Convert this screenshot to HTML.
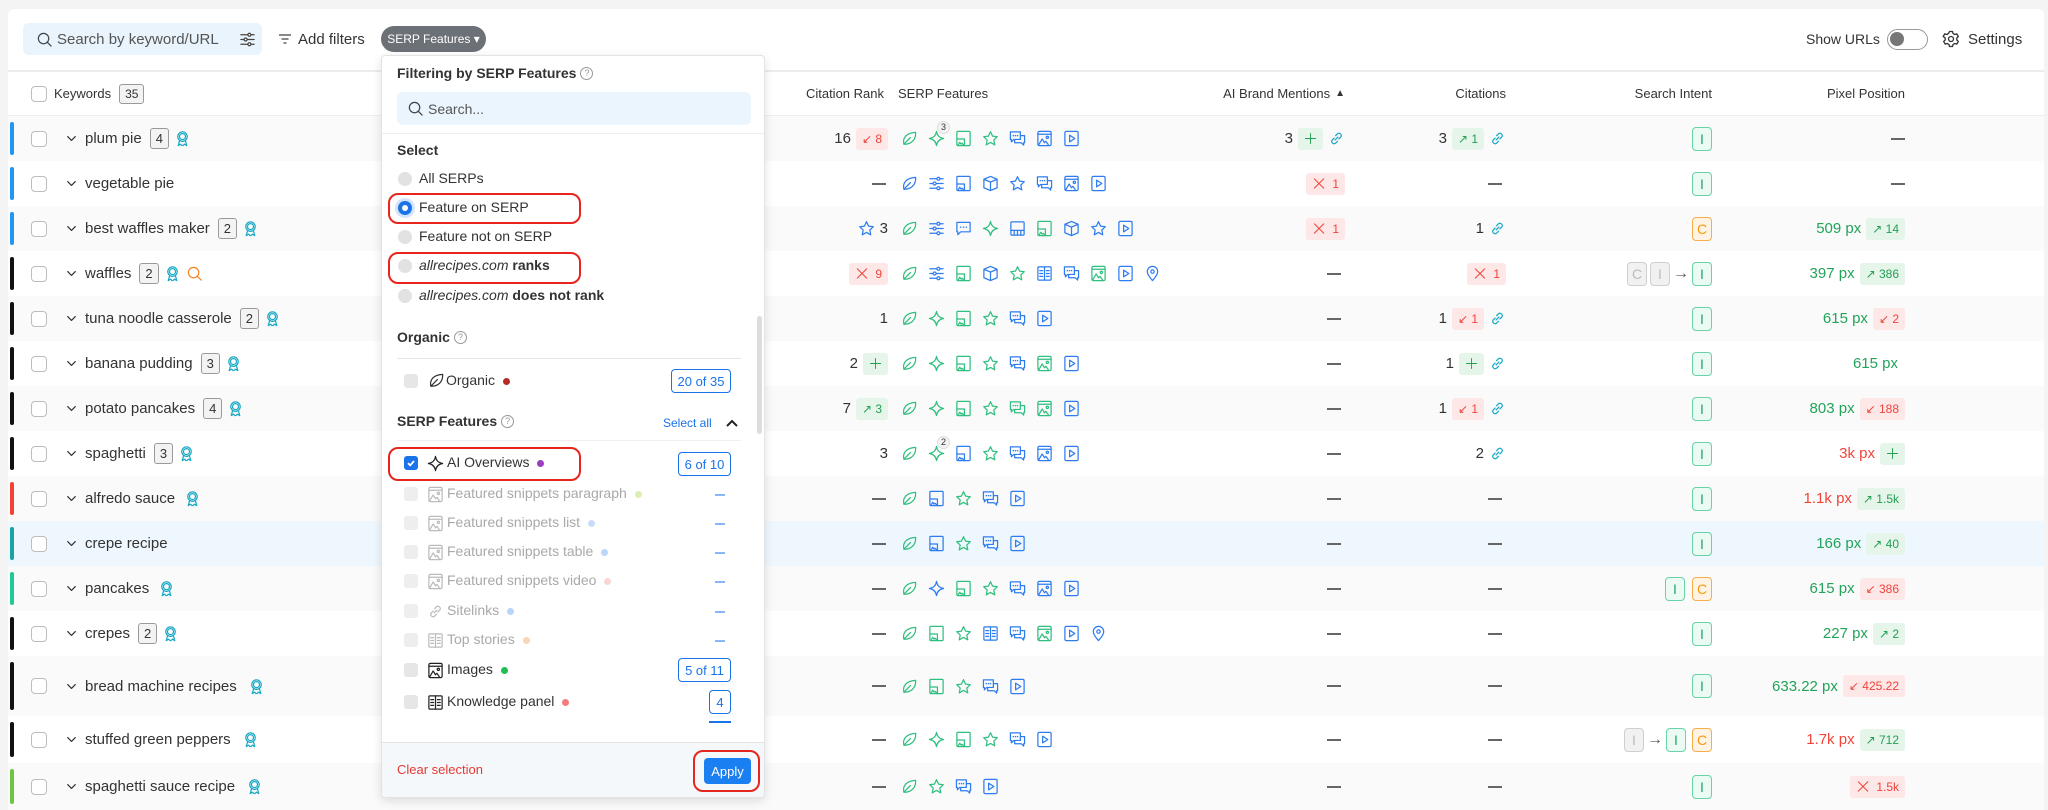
<!DOCTYPE html>
<html><head><meta charset="utf-8">
<style>
*{box-sizing:border-box;margin:0;padding:0}
body{width:2048px;height:810px;overflow:hidden;background:#f4f4f4;font-family:"Liberation Sans",Arial,sans-serif;color:#333;position:relative}
.card{position:absolute;left:8px;top:9px;right:4px;bottom:0;background:#fff;border-radius:6px 6px 0 0}
.abs{position:absolute}
.fx{display:flex;align-items:center}
svg.i{width:17px;height:17px;fill:none;stroke:currentColor;stroke-width:1.3;stroke-linecap:round;stroke-linejoin:round;flex:none}
.gr{color:#2fbf7e}.bl{color:#2d7cf0}.tl{color:#19a8c4}
.row{position:absolute;left:8px;right:4px}
.row>.c{position:absolute;top:0;height:100%;display:flex;align-items:center;gap:5px}
.sh{background:#fafafa}
.bar{position:absolute;left:2px;width:4px;top:6px;bottom:6px;border-radius:2px}
.cb{width:16px;height:16px;border:1px solid #bdbdbd;border-radius:4px;background:#fff}
.kw{font-size:15px;color:#333}
.cnt{font-size:13px;border:1px solid #9a9a9a;border-radius:3px;background:#f3f3f3;height:21px;min-width:19px;padding:0 5px;display:flex;align-items:center;justify-content:center;margin-left:3px}
.num{font-size:15px;color:#333}
.b{height:22px;padding:0 6px;border-radius:3px;font-size:12px;display:flex;align-items:center;gap:6px}
.r{background:#fde7e7;color:#f0443a}.g{background:#e5f5ea;color:#22a055}
.dash{width:14px;height:2px;background:#666}
.in{width:20px;height:24px;border-radius:4px;font-size:14px;display:flex;align-items:center;justify-content:center}
.iI{border:1px solid #67d3a6;background:#ebfaf3;color:#2aa36d}
.iC{border:1px solid #f6ae4c;background:#fff4e4;color:#f39a13}
.iG{border:1px solid #cfcfcf;background:#f1f1f1;color:#bbb}
.pg{font-size:15px;color:#22a35a}.pr{font-size:15px;color:#f0443a}
.serp{gap:10px!important}
.hd{font-size:13px;color:#333}
.dd{position:absolute;left:381px;top:55px;width:384px;height:743px;background:#fff;border:1px solid #e3e3e3;border-radius:4px;box-shadow:0 3px 10px rgba(0,0,0,.12);z-index:5;overflow:hidden}
.dd .t{position:absolute;font-size:14px}
.rad{position:absolute;left:16px;width:14px;height:14px;border-radius:50%;background:#e2e2e2}
.rbox{position:absolute;border:2.5px solid #e8251d;border-radius:10px}
.ck{position:absolute;left:22px;width:14px;height:14px;border-radius:3px;background:#e6e6e6}
.cntb{position:absolute;border:1.5px solid #1a73e8;border-radius:4px;color:#1a73e8;font-size:13px;display:flex;align-items:center;justify-content:center;height:24px}
.dot{display:inline-block;width:7px;height:7px;border-radius:50%;margin-left:8px;vertical-align:middle}
.dis{color:#a9a9a9}
.q{display:inline-block;width:13px;height:13px;border:1px solid #999;border-radius:50%;font-size:9px;color:#999;text-align:center;line-height:11px;margin-left:4px;vertical-align:2px;font-weight:normal}
.ddash{position:absolute;left:333px;width:10px;height:2px;background:#8ab4f8}
</style></head><body>
<svg width="0" height="0" style="position:absolute">
<defs>
<symbol id="leaf" viewBox="0 0 18 18"><path d="M3 15C1.5 8 6 3 15.5 2.5C16 10 11 15.5 3 15ZM3 15L10 8"/></symbol>
<symbol id="dia" viewBox="0 0 18 18"><path d="M9 1.5Q10 8 16.5 9Q10 10 9 16.5Q8 10 1.5 9Q8 8 9 1.5Z"/></symbol>
<symbol id="fsi" viewBox="0 0 18 18"><rect x="2" y="1.5" width="14" height="15" rx="1"/><path d="M2 9.5H10V16.5M3.5 15.5L5 13L6.5 15L7.5 14L9 15.5"/></symbol>
<symbol id="star" viewBox="0 0 18 18"><path d="M9 1.8L11.2 6.5L16.2 7.1L12.5 10.6L13.5 15.7L9 13.2L4.5 15.7L5.5 10.6L1.8 7.1L6.8 6.5Z"/></symbol>
<symbol id="chat" viewBox="0 0 18 18"><path d="M1.5 2H12V10H5L2.5 12.5V10H1.5ZM12 6H16.5V13.5H15.5V16L13 13.5H6V10"/><path d="M4.5 6h.1M6.8 6h.1M9 6h.1" stroke-width="1.6"/></symbol>
<symbol id="photo" viewBox="0 0 18 18"><rect x="2" y="1.5" width="14" height="15" rx="1.5"/><path d="M2 4.5H16M3 15.5L6.5 9.5L9 13.5L10.5 12L13 15.5"/><circle cx="12" cy="7.8" r="1.2"/></symbol>
<symbol id="play" viewBox="0 0 18 18"><rect x="2" y="1.5" width="14" height="15" rx="1.5"/><path d="M7 5.5L12.5 9L7 12.5Z"/></symbol>
<symbol id="sld" viewBox="0 0 18 18"><path d="M2 4H16M2 9H16M2 14H16"/><circle cx="11" cy="4" r="1.6" fill="#fff"/><circle cx="7" cy="9" r="1.6" fill="#fff"/><circle cx="11" cy="14" r="1.6" fill="#fff"/></symbol>
<symbol id="cube" viewBox="0 0 18 18"><path d="M9 1.5L16 4.5V13.5L9 16.5L2 13.5V4.5ZM2 4.5L9 7.5L16 4.5M9 7.5V16.5"/></symbol>
<symbol id="book" viewBox="0 0 18 18"><rect x="2" y="2" width="14" height="14" rx="1"/><path d="M9 2V16M4 6H7M4 9H7M4 12H7M11 6H14M11 9H14M11 12H14"/></symbol>
<symbol id="pin" viewBox="0 0 18 18"><path d="M9 16.5C5 12 3.5 9.5 3.5 7A5.5 5.5 0 0 1 14.5 7C14.5 9.5 13 12 9 16.5Z"/><circle cx="9" cy="7" r="1.8"/></symbol>
<symbol id="tbl" viewBox="0 0 18 18"><rect x="2" y="2" width="14" height="14" rx="1"/><path d="M2 11H16M5.5 11V16M9 11V16M12.5 11V16"/></symbol>
<symbol id="bub" viewBox="0 0 18 18"><path d="M2 2.5H16V12.5H6L3 15.5V12.5H2Z"/><path d="M6 7.5h.1M9 7.5h.1M12 7.5h.1" stroke-width="1.6"/></symbol>
<symbol id="link" viewBox="0 0 18 18"><path d="M7.5 10.5L10.5 7.5M6.5 8.5L4.5 10.5A2.5 2.5 0 0 0 8 14L10 12M11.5 9.5L13.5 7.5A2.5 2.5 0 0 0 10 4L8 6"/></symbol>
<symbol id="award" viewBox="0 0 18 18"><circle cx="9" cy="7" r="5"/><circle cx="9" cy="7" r="3.2"/><path d="M6 11L4.5 16.5L7 15L8.5 16.5M12 11L13.5 16.5L11 15L9.5 16.5"/></symbol>
<symbol id="x" viewBox="0 0 18 18"><path d="M3 3L15 15M15 3L3 15"/></symbol>
<symbol id="plus" viewBox="0 0 18 18"><path d="M9 2V16M2 9H16"/></symbol>
<symbol id="chev" viewBox="0 0 18 18"><path d="M5 7L9 11L13 7"/></symbol>
<symbol id="srch" viewBox="0 0 18 18"><circle cx="8" cy="8" r="5.5"/><path d="M12 12L16 16"/></symbol>
</defs></svg>

<div class="card"></div>
<!-- toolbar -->
<div class="abs fx" style="left:23px;top:23px;width:239px;height:32px;background:#e9f4fd;border-radius:6px;padding-left:13px;font-size:15px;color:#555;gap:4px"><svg class="i" style="color:#444"><use href="#srch"/></svg>Search by keyword/URL<svg class="i" style="color:#444;margin-left:16px"><use href="#sld"/></svg></div>
<div class="abs fx" style="left:278px;top:23px;height:32px;font-size:15px;color:#333;gap:6px"><svg width="14" height="12" style="stroke:#444;stroke-width:1.3"><path d="M1 2H13M3.5 6H10.5M5.5 10H8.5"/></svg>Add filters</div>
<div class="abs fx" style="left:381px;top:26px;width:105px;height:26px;border-radius:13px;background:#6c7077;color:#fff;font-size:12px;justify-content:center">SERP Features ▾</div>
<div class="abs fx" style="left:1806px;top:27px;height:24px;font-size:14px;color:#333">Show URLs</div>
<div class="abs" style="left:1887px;top:29px;width:41px;height:21px;border:1.5px solid #999;border-radius:11px"><div class="abs" style="left:2px;top:2px;width:14px;height:14px;border-radius:50%;background:#777"></div></div>
<svg class="abs" style="left:1942px;top:30px;width:18px;height:18px;fill:none;stroke:#333;stroke-width:1.3" viewBox="0 0 18 18"><circle cx="9" cy="9" r="2.5"/><path d="M7.5 1.5h3l.5 2 1.8 1 2-.6 1.5 2.6-1.5 1.5v2l1.5 1.5-1.5 2.6-2-.6-1.8 1-.5 2h-3l-.5-2-1.8-1-2 .6-1.5-2.6 1.5-1.5v-2L1.2 6.5 2.7 3.9l2 .6 1.8-1z"/></svg>
<div class="abs fx" style="left:1968px;top:27px;height:24px;font-size:15px;color:#333">Settings</div>
<div class="abs" style="left:8px;right:4px;top:70px;height:2px;background:#ececec"></div>

<!-- header -->
<div class="row" style="top:72px;height:44px;border-bottom:1px solid #eee">
<div class="c" style="left:23px"><div class="cb"></div><span class="hd" style="margin-left:2px">Keywords</span><span class="cnt" style="font-size:12px;height:20px">35</span></div>
<div class="c hd" style="right:1160px">Citation Rank</div>
<div class="c hd" style="left:890px">SERP Features</div>
<div class="c hd" style="right:699px">AI Brand Mentions <span style="font-size:10px">▲</span></div>
<div class="c hd" style="right:538px">Citations</div>
<div class="c hd" style="right:332px">Search Intent</div>
<div class="c hd" style="right:139px">Pixel Position</div>
</div>

<!-- rows -->
<div class="row sh" style="top:116px;height:45px"><div class="bar" style="background:#2196f3"></div><div class="c" style="left:23px"><div class="cb"></div></div><div class="c" style="left:55px"><svg class="i" style="color:#333"><use href="#chev"/></svg><span class="kw">plum pie</span><span class="cnt">4</span><svg class="i tl"><use href="#award"/></svg></div>
<div class="c" style="right:1156px"><span class="num">16</span><span class="b r">↙ 8</span></div>
<div class="c serp" style="left:893px"><svg class="i gr"><use href="#leaf"/></svg><span style="position:relative;display:flex"><svg class="i gr"><use href="#dia"/></svg><span style="position:absolute;left:9px;top:-9px;width:13px;height:13px;border-radius:50%;background:#f3f3f3;border:1px solid #ddd;font-size:9px;text-align:center;line-height:11px">3</span></span><svg class="i gr"><use href="#fsi"/></svg><svg class="i gr"><use href="#star"/></svg><svg class="i bl"><use href="#chat"/></svg><svg class="i bl"><use href="#photo"/></svg><svg class="i bl"><use href="#play"/></svg></div>
<div class="c" style="right:699px"><span class="num">3</span><span class="b g"><svg class="i" style="width:13px"><use href="#plus"/></svg></span><svg class="i tl"><use href="#link"/></svg></div>
<div class="c" style="right:538px"><span class="num">3</span><span class="b g">↗ 1</span><svg class="i tl"><use href="#link"/></svg></div>
<div class="c" style="right:332px"><span class="in iI">I</span></div>
<div class="c" style="right:139px"><span class="dash"></span></div></div>

<div class="row" style="top:161px;height:45px"><div class="bar" style="background:#2196f3"></div><div class="c" style="left:23px"><div class="cb"></div></div><div class="c" style="left:55px"><svg class="i" style="color:#333"><use href="#chev"/></svg><span class="kw">vegetable pie</span></div>
<div class="c" style="right:1158px"><span class="dash"></span></div>
<div class="c serp" style="left:893px"><svg class="i bl"><use href="#leaf"/></svg><svg class="i bl"><use href="#sld"/></svg><svg class="i bl"><use href="#fsi"/></svg><svg class="i bl"><use href="#cube"/></svg><svg class="i bl"><use href="#star"/></svg><svg class="i bl"><use href="#chat"/></svg><svg class="i bl"><use href="#photo"/></svg><svg class="i bl"><use href="#play"/></svg></div>
<div class="c" style="right:699px"><span class="b r"><svg class="i" style="width:14px"><use href="#x"/></svg>1</span></div>
<div class="c" style="right:542px"><span class="dash"></span></div>
<div class="c" style="right:332px"><span class="in iI">I</span></div>
<div class="c" style="right:139px"><span class="dash"></span></div></div>

<div class="row sh" style="top:206px;height:45px"><div class="bar" style="background:#2196f3"></div><div class="c" style="left:23px"><div class="cb"></div></div><div class="c" style="left:55px"><svg class="i" style="color:#333"><use href="#chev"/></svg><span class="kw">best waffles maker</span><span class="cnt">2</span><svg class="i tl"><use href="#award"/></svg></div>
<div class="c" style="right:1156px"><svg class="i bl"><use href="#star"/></svg><span class="num">3</span></div>
<div class="c serp" style="left:893px"><svg class="i gr"><use href="#leaf"/></svg><svg class="i bl"><use href="#sld"/></svg><svg class="i bl"><use href="#bub"/></svg><svg class="i gr"><use href="#dia"/></svg><svg class="i bl"><use href="#tbl"/></svg><svg class="i gr"><use href="#fsi"/></svg><svg class="i bl"><use href="#cube"/></svg><svg class="i bl"><use href="#star"/></svg><svg class="i bl"><use href="#play"/></svg></div>
<div class="c" style="right:699px"><span class="b r"><svg class="i" style="width:14px"><use href="#x"/></svg>1</span></div>
<div class="c" style="right:538px"><span class="num">1</span><svg class="i tl"><use href="#link"/></svg></div>
<div class="c" style="right:332px"><span class="in iC">C</span></div>
<div class="c" style="right:139px"><span class="pg">509 px</span><span class="b g">↗ 14</span></div></div>

<div class="row" style="top:251px;height:45px"><div class="bar" style="background:#111"></div><div class="c" style="left:23px"><div class="cb"></div></div><div class="c" style="left:55px"><svg class="i" style="color:#333"><use href="#chev"/></svg><span class="kw">waffles</span><span class="cnt">2</span><svg class="i tl"><use href="#award"/></svg><svg class="i" style="color:#f5831f"><use href="#srch"/></svg></div>
<div class="c" style="right:1156px"><span class="b r"><svg class="i" style="width:14px"><use href="#x"/></svg>9</span></div>
<div class="c serp" style="left:893px"><svg class="i gr"><use href="#leaf"/></svg><svg class="i bl"><use href="#sld"/></svg><svg class="i gr"><use href="#fsi"/></svg><svg class="i bl"><use href="#cube"/></svg><svg class="i gr"><use href="#star"/></svg><svg class="i bl"><use href="#book"/></svg><svg class="i bl"><use href="#chat"/></svg><svg class="i gr"><use href="#photo"/></svg><svg class="i bl"><use href="#play"/></svg><svg class="i bl"><use href="#pin"/></svg></div>
<div class="c" style="right:703px"><span class="dash"></span></div>
<div class="c" style="right:538px"><span class="b r"><svg class="i" style="width:14px"><use href="#x"/></svg>1</span></div>
<div class="c" style="right:332px;gap:3px"><span class="in iG">C</span><span class="in iG">I</span><span style="color:#555">→</span><span class="in iI">I</span></div>
<div class="c" style="right:139px"><span class="pg">397 px</span><span class="b g">↗ 386</span></div></div>

<div class="row sh" style="top:296px;height:45px"><div class="bar" style="background:#111"></div><div class="c" style="left:23px"><div class="cb"></div></div><div class="c" style="left:55px"><svg class="i" style="color:#333"><use href="#chev"/></svg><span class="kw">tuna noodle casserole</span><span class="cnt">2</span><svg class="i tl"><use href="#award"/></svg></div>
<div class="c" style="right:1156px"><span class="num">1</span></div>
<div class="c serp" style="left:893px"><svg class="i gr"><use href="#leaf"/></svg><svg class="i gr"><use href="#dia"/></svg><svg class="i gr"><use href="#fsi"/></svg><svg class="i gr"><use href="#star"/></svg><svg class="i bl"><use href="#chat"/></svg><svg class="i bl"><use href="#play"/></svg></div>
<div class="c" style="right:703px"><span class="dash"></span></div>
<div class="c" style="right:538px"><span class="num">1</span><span class="b r">↙ 1</span><svg class="i tl"><use href="#link"/></svg></div>
<div class="c" style="right:332px"><span class="in iI">I</span></div>
<div class="c" style="right:139px"><span class="pg">615 px</span><span class="b r">↙ 2</span></div></div>

<div class="row" style="top:341px;height:45px"><div class="bar" style="background:#111"></div><div class="c" style="left:23px"><div class="cb"></div></div><div class="c" style="left:55px"><svg class="i" style="color:#333"><use href="#chev"/></svg><span class="kw">banana pudding</span><span class="cnt">3</span><svg class="i tl"><use href="#award"/></svg></div>
<div class="c" style="right:1156px"><span class="num">2</span><span class="b g"><svg class="i" style="width:13px"><use href="#plus"/></svg></span></div>
<div class="c serp" style="left:893px"><svg class="i gr"><use href="#leaf"/></svg><svg class="i gr"><use href="#dia"/></svg><svg class="i gr"><use href="#fsi"/></svg><svg class="i gr"><use href="#star"/></svg><svg class="i bl"><use href="#chat"/></svg><svg class="i gr"><use href="#photo"/></svg><svg class="i bl"><use href="#play"/></svg></div>
<div class="c" style="right:703px"><span class="dash"></span></div>
<div class="c" style="right:538px"><span class="num">1</span><span class="b g"><svg class="i" style="width:13px"><use href="#plus"/></svg></span><svg class="i tl"><use href="#link"/></svg></div>
<div class="c" style="right:332px"><span class="in iI">I</span></div>
<div class="c" style="right:146px"><span class="pg">615 px</span></div></div>

<div class="row sh" style="top:386px;height:45px"><div class="bar" style="background:#111"></div><div class="c" style="left:23px"><div class="cb"></div></div><div class="c" style="left:55px"><svg class="i" style="color:#333"><use href="#chev"/></svg><span class="kw">potato pancakes</span><span class="cnt">4</span><svg class="i tl"><use href="#award"/></svg></div>
<div class="c" style="right:1156px"><span class="num">7</span><span class="b g">↗ 3</span></div>
<div class="c serp" style="left:893px"><svg class="i gr"><use href="#leaf"/></svg><svg class="i gr"><use href="#dia"/></svg><svg class="i gr"><use href="#fsi"/></svg><svg class="i gr"><use href="#star"/></svg><svg class="i gr"><use href="#chat"/></svg><svg class="i gr"><use href="#photo"/></svg><svg class="i bl"><use href="#play"/></svg></div>
<div class="c" style="right:703px"><span class="dash"></span></div>
<div class="c" style="right:538px"><span class="num">1</span><span class="b r">↙ 1</span><svg class="i tl"><use href="#link"/></svg></div>
<div class="c" style="right:332px"><span class="in iI">I</span></div>
<div class="c" style="right:139px"><span class="pg">803 px</span><span class="b r">↙ 188</span></div></div>

<div class="row" style="top:431px;height:45px"><div class="bar" style="background:#111"></div><div class="c" style="left:23px"><div class="cb"></div></div><div class="c" style="left:55px"><svg class="i" style="color:#333"><use href="#chev"/></svg><span class="kw">spaghetti</span><span class="cnt">3</span><svg class="i tl"><use href="#award"/></svg></div>
<div class="c" style="right:1156px"><span class="num">3</span></div>
<div class="c serp" style="left:893px"><svg class="i gr"><use href="#leaf"/></svg><span style="position:relative;display:flex"><svg class="i gr"><use href="#dia"/></svg><span style="position:absolute;left:9px;top:-9px;width:13px;height:13px;border-radius:50%;background:#f3f3f3;border:1px solid #ddd;font-size:9px;text-align:center;line-height:11px">2</span></span><svg class="i bl"><use href="#fsi"/></svg><svg class="i gr"><use href="#star"/></svg><svg class="i bl"><use href="#chat"/></svg><svg class="i bl"><use href="#photo"/></svg><svg class="i bl"><use href="#play"/></svg></div>
<div class="c" style="right:703px"><span class="dash"></span></div>
<div class="c" style="right:538px"><span class="num">2</span><svg class="i tl"><use href="#link"/></svg></div>
<div class="c" style="right:332px"><span class="in iI">I</span></div>
<div class="c" style="right:139px"><span class="pr">3k px</span><span class="b g"><svg class="i" style="width:13px"><use href="#plus"/></svg></span></div></div>

<div class="row sh" style="top:476px;height:45px"><div class="bar" style="background:#f44336"></div><div class="c" style="left:23px"><div class="cb"></div></div><div class="c" style="left:55px"><svg class="i" style="color:#333"><use href="#chev"/></svg><span class="kw">alfredo sauce</span><svg class="i tl" style="margin-left:4px"><use href="#award"/></svg></div>
<div class="c" style="right:1158px"><span class="dash"></span></div>
<div class="c serp" style="left:893px"><svg class="i gr"><use href="#leaf"/></svg><svg class="i bl"><use href="#fsi"/></svg><svg class="i gr"><use href="#star"/></svg><svg class="i bl"><use href="#chat"/></svg><svg class="i bl"><use href="#play"/></svg></div>
<div class="c" style="right:703px"><span class="dash"></span></div>
<div class="c" style="right:542px"><span class="dash"></span></div>
<div class="c" style="right:332px"><span class="in iI">I</span></div>
<div class="c" style="right:139px"><span class="pr">1.1k px</span><span class="b g">↗ 1.5k</span></div></div>

<div class="row" style="top:521px;height:45px;background:#eef7fe"><div class="bar" style="background:#1aa3a3"></div><div class="c" style="left:23px"><div class="cb"></div></div><div class="c" style="left:55px"><svg class="i" style="color:#333"><use href="#chev"/></svg><span class="kw">crepe recipe</span></div>
<div class="c" style="right:1158px"><span class="dash"></span></div>
<div class="c serp" style="left:893px"><svg class="i gr"><use href="#leaf"/></svg><svg class="i bl"><use href="#fsi"/></svg><svg class="i gr"><use href="#star"/></svg><svg class="i bl"><use href="#chat"/></svg><svg class="i bl"><use href="#play"/></svg></div>
<div class="c" style="right:703px"><span class="dash"></span></div>
<div class="c" style="right:542px"><span class="dash"></span></div>
<div class="c" style="right:332px"><span class="in iI">I</span></div>
<div class="c" style="right:139px"><span class="pg">166 px</span><span class="b g">↗ 40</span></div></div>

<div class="row sh" style="top:566px;height:45px"><div class="bar" style="background:#20c997"></div><div class="c" style="left:23px"><div class="cb"></div></div><div class="c" style="left:55px"><svg class="i" style="color:#333"><use href="#chev"/></svg><span class="kw">pancakes</span><svg class="i tl" style="margin-left:4px"><use href="#award"/></svg></div>
<div class="c" style="right:1158px"><span class="dash"></span></div>
<div class="c serp" style="left:893px"><svg class="i gr"><use href="#leaf"/></svg><svg class="i bl"><use href="#dia"/></svg><svg class="i gr"><use href="#fsi"/></svg><svg class="i gr"><use href="#star"/></svg><svg class="i bl"><use href="#chat"/></svg><svg class="i bl"><use href="#photo"/></svg><svg class="i bl"><use href="#play"/></svg></div>
<div class="c" style="right:703px"><span class="dash"></span></div>
<div class="c" style="right:542px"><span class="dash"></span></div>
<div class="c" style="right:332px;gap:7px"><span class="in iI">I</span><span class="in iC">C</span></div>
<div class="c" style="right:139px"><span class="pg">615 px</span><span class="b r">↙ 386</span></div></div>

<div class="row" style="top:611px;height:45px"><div class="bar" style="background:#111"></div><div class="c" style="left:23px"><div class="cb"></div></div><div class="c" style="left:55px"><svg class="i" style="color:#333"><use href="#chev"/></svg><span class="kw">crepes</span><span class="cnt">2</span><svg class="i tl"><use href="#award"/></svg></div>
<div class="c" style="right:1158px"><span class="dash"></span></div>
<div class="c serp" style="left:893px"><svg class="i gr"><use href="#leaf"/></svg><svg class="i gr"><use href="#fsi"/></svg><svg class="i gr"><use href="#star"/></svg><svg class="i bl"><use href="#book"/></svg><svg class="i bl"><use href="#chat"/></svg><svg class="i gr"><use href="#photo"/></svg><svg class="i bl"><use href="#play"/></svg><svg class="i bl"><use href="#pin"/></svg></div>
<div class="c" style="right:703px"><span class="dash"></span></div>
<div class="c" style="right:542px"><span class="dash"></span></div>
<div class="c" style="right:332px"><span class="in iI">I</span></div>
<div class="c" style="right:139px"><span class="pg">227 px</span><span class="b g">↗ 2</span></div></div>

<div class="row sh" style="top:656px;height:60px"><div class="bar" style="background:#111"></div><div class="c" style="left:23px"><div class="cb"></div></div><div class="c" style="left:55px"><svg class="i" style="color:#333"><use href="#chev"/></svg><span class="kw">bread machine recipes</span><svg class="i tl" style="margin-left:6px"><use href="#award"/></svg></div>
<div class="c" style="right:1158px"><span class="dash"></span></div>
<div class="c serp" style="left:893px"><svg class="i gr"><use href="#leaf"/></svg><svg class="i gr"><use href="#fsi"/></svg><svg class="i gr"><use href="#star"/></svg><svg class="i bl"><use href="#chat"/></svg><svg class="i bl"><use href="#play"/></svg></div>
<div class="c" style="right:703px"><span class="dash"></span></div>
<div class="c" style="right:542px"><span class="dash"></span></div>
<div class="c" style="right:332px"><span class="in iI">I</span></div>
<div class="c" style="right:139px"><span class="pg">633.22 px</span><span class="b r">↙ 425.22</span></div></div>

<div class="row" style="top:716px;height:47px"><div class="bar" style="background:#111"></div><div class="c" style="left:23px"><div class="cb"></div></div><div class="c" style="left:55px"><svg class="i" style="color:#333"><use href="#chev"/></svg><span class="kw">stuffed green peppers</span><svg class="i tl" style="margin-left:6px"><use href="#award"/></svg></div>
<div class="c" style="right:1158px"><span class="dash"></span></div>
<div class="c serp" style="left:893px"><svg class="i gr"><use href="#leaf"/></svg><svg class="i gr"><use href="#dia"/></svg><svg class="i gr"><use href="#fsi"/></svg><svg class="i gr"><use href="#star"/></svg><svg class="i bl"><use href="#chat"/></svg><svg class="i bl"><use href="#play"/></svg></div>
<div class="c" style="right:703px"><span class="dash"></span></div>
<div class="c" style="right:542px"><span class="dash"></span></div>
<div class="c" style="right:332px;gap:3px"><span class="in iG">I</span><span style="color:#555">→</span><span class="in iI">I</span><span class="in iC" style="margin-left:3px">C</span></div>
<div class="c" style="right:139px"><span class="pr">1.7k px</span><span class="b g">↗ 712</span></div></div>

<div class="row sh" style="top:763px;height:47px"><div class="bar" style="background:#6cc644"></div><div class="c" style="left:23px"><div class="cb"></div></div><div class="c" style="left:55px"><svg class="i" style="color:#333"><use href="#chev"/></svg><span class="kw">spaghetti sauce recipe</span><svg class="i tl" style="margin-left:6px"><use href="#award"/></svg></div>
<div class="c" style="right:1158px"><span class="dash"></span></div>
<div class="c serp" style="left:893px"><svg class="i gr"><use href="#leaf"/></svg><svg class="i gr"><use href="#star"/></svg><svg class="i bl"><use href="#chat"/></svg><svg class="i bl"><use href="#play"/></svg></div>
<div class="c" style="right:703px"><span class="dash"></span></div>
<div class="c" style="right:542px"><span class="dash"></span></div>
<div class="c" style="right:332px"><span class="in iI">I</span></div>
<div class="c" style="right:139px"><span class="b r"><svg class="i" style="width:14px"><use href="#x"/></svg>1.5k</span></div></div>

<!-- dropdown -->
<div class="dd">
<div class="t" style="left:15px;top:9px;font-weight:bold">Filtering by SERP Features<span class="q">?</span></div>
<div class="abs fx" style="left:15px;top:36px;width:354px;height:33px;background:#ebf5fd;border-radius:6px;padding-left:10px;gap:4px;font-size:14px;color:#555"><svg class="i" style="color:#444"><use href="#srch"/></svg>Search...</div>
<div class="abs" style="left:0;right:0;top:77px;height:1px;background:#eee"></div>
<div class="t" style="left:15px;top:86px;font-weight:bold">Select</div>
<div class="rad" style="top:116px"></div><div class="t" style="left:37px;top:114px">All SERPs</div>
<div class="rad" style="top:145px;background:#1a73e8;box-shadow:0 0 0 3px #d4e5fb"><div style="position:absolute;left:4px;top:4px;width:6px;height:6px;border-radius:50%;background:#fff"></div></div><div class="t" style="left:37px;top:143px">Feature on SERP</div>
<div class="rad" style="top:174px"></div><div class="t" style="left:37px;top:172px">Feature not on SERP</div>
<div class="rad" style="top:203px"></div><div class="t" style="left:37px;top:201px"><i>allrecipes.com</i> <b>ranks</b></div>
<div class="rad" style="top:233px"></div><div class="t" style="left:37px;top:231px"><i>allrecipes.com</i> <b>does not rank</b></div>
<div class="rbox" style="left:6px;top:137px;width:193px;height:31px"></div>
<div class="rbox" style="left:6px;top:196px;width:193px;height:32px"></div>
<div class="abs" style="left:375px;top:260px;width:5px;height:118px;background:#ddd;border-radius:3px"></div>
<div class="t" style="left:15px;top:273px;font-weight:bold">Organic<span class="q">?</span></div>
<div class="abs" style="left:15px;top:302px;width:344px;height:1px;background:#e6e6e6"></div>
<div class="ck" style="top:318px"></div><svg class="i abs" style="left:46px;top:316px;color:#333"><use href="#leaf"/></svg><div class="t" style="left:64px;top:316px">Organic<span class="dot" style="background:#b72b2b"></span></div>
<div class="cntb" style="left:289px;top:313px;width:60px">20 of 35</div>
<div class="t" style="left:15px;top:357px;font-weight:bold">SERP Features<span class="q">?</span></div>
<div class="t" style="left:281px;top:360px;font-size:12px;color:#1a73e8">Select all</div>
<svg class="abs" style="left:343px;top:361px;width:14px;height:12px;fill:none;stroke:#222;stroke-width:2"><path d="M2 9L7 4L12 9"/></svg>
<div class="abs" style="left:15px;top:384px;width:344px;height:1px;background:#f0f0f0"></div>
<div class="ck" style="top:400px;background:#1a73e8"><svg width="14" height="14" style="fill:none;stroke:#fff;stroke-width:1.8"><path d="M4 7.2L6.2 9.3L10 5"/></svg></div>
<svg class="i abs" style="left:45px;top:399px;color:#222"><use href="#dia"/></svg><div class="t" style="left:65px;top:398px">AI Overviews<span class="dot" style="background:#9b3fc2"></span></div>
<div class="cntb" style="left:296px;top:396px;width:53px">6 of 10</div>
<div class="rbox" style="left:6px;top:391px;width:193px;height:34px"></div>
<div class="ck" style="top:431px;background:#eee"></div><svg class="i abs" style="left:45px;top:430px;color:#bbb"><use href="#photo"/></svg><div class="t dis" style="left:65px;top:429px">Featured snippets paragraph<span class="dot" style="background:#dcefb3"></span></div><div class="ddash" style="top:438px"></div>
<div class="ck" style="top:460px;background:#eee"></div><svg class="i abs" style="left:45px;top:459px;color:#bbb"><use href="#photo"/></svg><div class="t dis" style="left:65px;top:458px">Featured snippets list<span class="dot" style="background:#c8dcfa"></span></div><div class="ddash" style="top:467px"></div>
<div class="ck" style="top:489px;background:#eee"></div><svg class="i abs" style="left:45px;top:488px;color:#bbb"><use href="#photo"/></svg><div class="t dis" style="left:65px;top:487px">Featured snippets table<span class="dot" style="background:#bcd6fb"></span></div><div class="ddash" style="top:496px"></div>
<div class="ck" style="top:518px;background:#eee"></div><svg class="i abs" style="left:45px;top:517px;color:#bbb"><use href="#photo"/></svg><div class="t dis" style="left:65px;top:516px">Featured snippets video<span class="dot" style="background:#fbd3d3"></span></div><div class="ddash" style="top:525px"></div>
<div class="ck" style="top:548px;background:#eee"></div><svg class="i abs" style="left:45px;top:547px;color:#bbb"><use href="#link"/></svg><div class="t dis" style="left:65px;top:546px">Sitelinks<span class="dot" style="background:#b9d3fb"></span></div><div class="ddash" style="top:555px"></div>
<div class="ck" style="top:577px;background:#eee"></div><svg class="i abs" style="left:45px;top:576px;color:#bbb"><use href="#book"/></svg><div class="t dis" style="left:65px;top:575px">Top stories<span class="dot" style="background:#f8d5b4"></span></div><div class="ddash" style="top:584px"></div>
<div class="ck" style="top:607px"></div><svg class="i abs" style="left:45px;top:606px;color:#222"><use href="#photo"/></svg><div class="t" style="left:65px;top:605px">Images<span class="dot" style="background:#1fbf4f"></span></div>
<div class="cntb" style="left:296px;top:602px;width:53px">5 of 11</div>
<div class="ck" style="top:639px"></div><svg class="i abs" style="left:45px;top:638px;color:#222"><use href="#book"/></svg><div class="t" style="left:65px;top:637px">Knowledge panel<span class="dot" style="background:#f47c7c"></span></div>
<div class="cntb" style="left:327px;top:634px;width:22px">4</div>
<div class="abs" style="left:327px;top:665px;width:22px;height:2px;background:#1a73e8"></div>
<div class="abs" style="left:0;right:0;top:667px;height:19px;background:#fff"></div>
<div class="abs" style="left:0;right:0;top:686px;bottom:0;background:#f5f8fb;border-top:1px solid #e3e3e3"></div>
<div class="t" style="left:15px;top:706px;font-size:13px;color:#e53935">Clear selection</div>
<div class="abs fx" style="left:322px;top:702px;width:47px;height:26px;background:#1a7ff0;border-radius:4px;color:#fff;font-size:13px;justify-content:center">Apply</div>
<div class="rbox" style="left:311px;top:694px;width:67px;height:42px"></div>
</div>
</body></html>
